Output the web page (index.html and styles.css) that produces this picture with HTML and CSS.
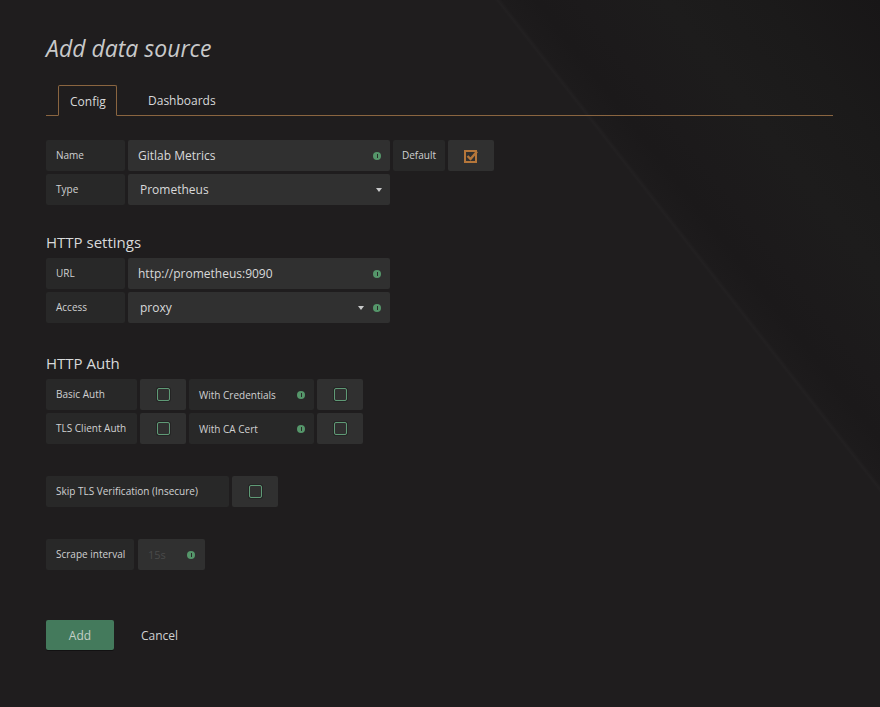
FILE: index.html
```html
<!DOCTYPE html>
<html>
<head>
<meta charset="utf-8">
<link rel="stylesheet" href="styles.css">
</head>
<body>
<div class="page">
  <h1 class="title">Add data source</h1>
  <div class="tabs">
    <div class="tab active">Config</div>
    <div class="tab">Dashboards</div>
  </div>

  <div class="rows first">
    <div class="row">
      <div class="label w79">Name</div>
      <div class="input w262"><span class="val">Gitlab Metrics</span><span class="info"></span></div>
      <div class="label w52 gap">Default</div>
      <div class="cbox gap4"><span class="check on"><svg width="14" height="14" viewBox="0 0 14 14"><rect x="1" y="2" width="11" height="11" fill="none" stroke="#b5763a" stroke-width="2"/><path d="M3.5 7 L6.5 10 L13 2.5" fill="none" stroke="#b5763a" stroke-width="2.4"/></svg></span></div>
    </div>
    <div class="row">
      <div class="label w79">Type</div>
      <div class="input w262 select"><span class="val">Prometheus</span><span class="caret"></span></div>
    </div>
  </div>

  <h2 class="section s1">HTTP settings</h2>
  <div class="rows">
    <div class="row">
      <div class="label w79">URL</div>
      <div class="input w262"><span class="val">http://prometheus:9090</span><span class="info"></span></div>
    </div>
    <div class="row">
      <div class="label w79">Access</div>
      <div class="input w262 select"><span class="val">proxy</span><span class="caret c2"></span><span class="info"></span></div>
    </div>
  </div>

  <h2 class="section s2">HTTP Auth</h2>
  <div class="rows">
    <div class="row">
      <div class="label w91">Basic Auth</div>
      <div class="cbox"><span class="check"></span></div>
      <div class="label w125 gap labinfo">With Credentials<span class="info"></span></div>
      <div class="cbox gap"><span class="check"></span></div>
    </div>
    <div class="row">
      <div class="label w91">TLS Client Auth</div>
      <div class="cbox"><span class="check"></span></div>
      <div class="label w125 gap labinfo">With CA Cert<span class="info"></span></div>
      <div class="cbox gap"><span class="check"></span></div>
    </div>
  </div>

  <div class="rows skip">
    <div class="row">
      <div class="label w183">Skip TLS Verification (Insecure)</div>
      <div class="cbox gap4"><span class="check"></span></div>
    </div>
  </div>

  <div class="rows scrape">
    <div class="row">
      <div class="label w88">Scrape interval</div>
      <div class="input w67 gap4"><span class="ph">15s</span><span class="info"></span></div>
    </div>
  </div>

  <div class="buttons">
    <button class="btn-add">Add</button>
    <span class="cancel">Cancel</span>
  </div>
</div>
</body>
</html>
```

FILE: styles.css
```css
html, body {
  margin: 0;
  padding: 0;
}
body {
  width: 880px;
  height: 707px;
  overflow: hidden;
  font-family: "Open Sans", "Noto Sans", sans-serif;
  color: #d8d9da;
  background-color: #1f1d1e;
  background-image: linear-gradient(52deg,
    #1f1d1e 0%,
    #1f1d1e 73.1%,
    #222021 73.3%,
    #1d1b1c 73.6%,
    #1b191a 76%,
    #1c1a1b 79%,
    #1d1c1c 85%,
    #1b1a1a 92%,
    #181617 100%);
}
.page {
  padding: 34px 47px 0 46px;
}
.title {
  margin: 0;
  font-size: 23px;
  font-weight: 400;
  font-style: italic;
  color: #c8c9ca;
  line-height: 28px;
  height: 28px;
}
.tabs {
  margin-top: 23px;
  display: flex;
  align-items: flex-end;
  border-bottom: 1px solid #8a6540;
  height: 30px;
  padding-left: 12px;
}
.tab {
  font-size: 12px;
  color: #d8d9da;
  height: 30px;
  line-height: 31px;
  padding: 0 12px;
  box-sizing: border-box;
}
.tab.active {
  border: 1px solid #8a6540;
  border-bottom: 1px solid #1f1d1e;
  margin-bottom: -1px;
  height: 31px;
  border-radius: 2px 2px 0 0;
  width: 59px;
  padding: 0 0 0 11px;
}
.tab + .tab {
  padding-left: 31px;
}
.rows {
  display: flex;
  flex-direction: column;
  gap: 4px;
}
.rows.first {
  margin-top: 24px;
}
.row {
  display: flex;
  height: 30px;
}
.label {
  box-sizing: border-box;
  height: 31px;
  background: #282828;
  border-radius: 2px;
  font-size: 10px;
  line-height: 30px;
  padding-left: 10px;
  color: #d0d1d2;
  white-space: nowrap;
}
.input {
  box-sizing: border-box;
  height: 31px;
  background: #303030;
  border-radius: 2px;
  margin-left: 3px;
  display: flex;
  align-items: center;
  padding: 0 9px 0 10px;
  font-size: 12px;
  color: #d8d9da;
}
.input .val {
  flex: 1;
}
.select .val {
  padding-left: 2px;
}
.w79 { width: 79px; }
.w262 { width: 262px; }
.w52 { width: 52px; }
.w91 { width: 91px; }
.w125 { width: 125px; }
.w183 { width: 183px; }
.w88 { width: 88px; }
.w67 { width: 67px; }
.gap { margin-left: 3px; }
.gap4 { margin-left: 4px; }
.label.w52 { padding-left: 9px; }
.labinfo {
  display: flex;
  align-items: center;
  padding-right: 9px;
  justify-content: space-between;
}
.cbox {
  box-sizing: border-box;
  width: 46px;
  height: 31px;
  background: #303030;
  border-radius: 2px;
  margin-left: 3px;
  display: flex;
  align-items: center;
  justify-content: center;
}
.check {
  display: block;
  width: 11px;
  height: 11px;
  border: 1px solid #5f9a76;
  border-radius: 2px;
  box-shadow: 0 0 0 1px rgba(0,0,0,0.25);
}
.check.on {
  border: none;
  box-shadow: none;
  width: 14px;
  height: 14px;
}
.check.on svg {
  display: block;
}
.info {
  display: inline-block;
  width: 8px;
  height: 8px;
  border-radius: 50%;
  background: #55966a;
  position: relative;
  flex: none;
}
.info::after {
  content: "";
  position: absolute;
  left: 3.5px;
  top: 2px;
  width: 1.5px;
  height: 4px;
  background: #2a2a2a;
}
.caret {
  width: 0;
  height: 0;
  border-left: 3.5px solid transparent;
  border-right: 3.5px solid transparent;
  border-top: 4px solid #c8c9ca;
  margin-right: -1px;
}
.caret.c2 {
  margin-right: 9px;
}
.section {
  margin: 0;
  font-size: 15px;
  font-weight: 400;
  color: #d8d9da;
  line-height: 20px;
}
.section.s1 {
  margin-top: 28px;
  margin-bottom: 6px;
}
.section.s2 {
  margin-top: 31px;
  margin-bottom: 6px;
}
.rows.skip {
  margin-top: 33px;
}
.rows.scrape {
  margin-top: 33px;
}
.ph {
  flex: 1;
  color: #4a4a4a;
  font-size: 11px;
  padding-left: 0;
}
.input.w67 {
  padding-left: 10px;
  padding-right: 10px;
}
.buttons {
  margin-top: 51px;
  display: flex;
  align-items: center;
}
.btn-add {
  width: 68px;
  height: 30px;
  border: none;
  border-radius: 2px;
  background: #447a5c;
  color: #c3cfc7;
  font-family: "Open Sans", "Noto Sans", sans-serif;
  font-size: 12px;
  padding: 0;
  box-shadow: 0 1px 0 rgba(0,0,0,0.4);
}
.cancel {
  margin-left: 27px;
  font-size: 12px;
  color: #d0d1d2;
}
```
